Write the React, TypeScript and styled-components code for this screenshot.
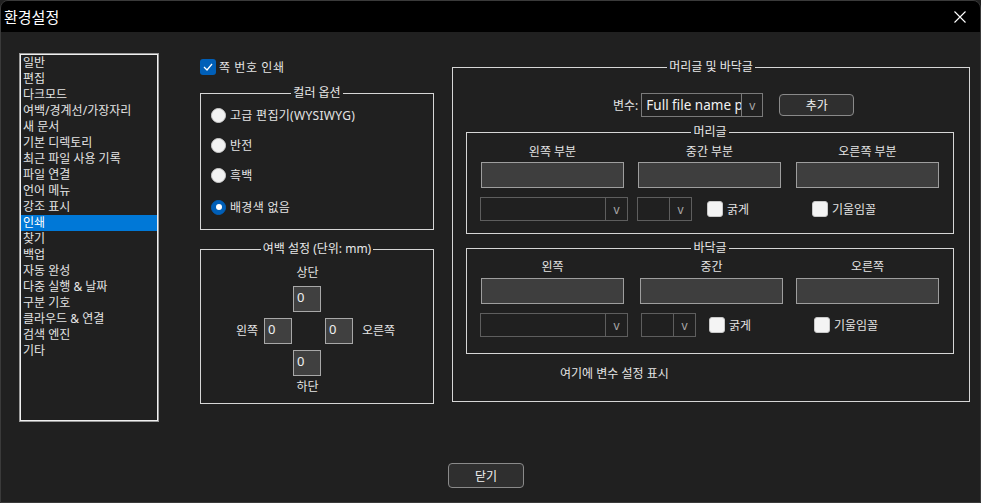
import React from "react";
import styled, { createGlobalStyle } from "styled-components";

const Global = createGlobalStyle`
  html, body { margin: 0; padding: 0; background: #202020; }
  * { box-sizing: border-box; }
`;

const FONT = `"Noto Sans", "Noto Sans CJK KR", sans-serif`;

const Window = styled.div`
  width: 981px;
  height: 503px;
  display: flex;
  flex-direction: column;
  background: #202020;
  border: 1px solid #3a3a3a;
  border-radius: 8px 8px 0 0;
  overflow: hidden;
  font-family: ${FONT};
  font-size: 12px;
  color: #e4e4e4;
`;

const TitleBar = styled.div`
  height: 31px;
  flex: none;
  background: #000;
  display: flex;
  align-items: center;
  padding-left: 3px;
`;

const TitleText = styled.div`
  font-size: 15px;
  color: #fff;
  font-family: "Noto Sans CJK KR", sans-serif;
  flex: 1;
`;

const CloseX = styled.div`
  width: 40px;
  height: 31px;
  display: flex;
  align-items: center;
  justify-content: center;
`;

const Main = styled.div`
  display: flex;
  align-items: flex-start;
  padding: 21px 0 0 18px;
`;

const ListBox = styled.div`
  width: 140px;
  height: 369px;
  border: 1px solid #9a9a9a;
  box-shadow: inset 0 0 0 1px #f0f0f0;
  padding: 1px;
  flex: none;
`;

const ListItem = styled.div<{ $selected?: boolean }>`
  height: 16px;
  line-height: 16px;
  padding-left: 2px;
  white-space: nowrap;
  background: ${(p) => (p.$selected ? "#0078d7" : "transparent")};
  color: ${(p) => (p.$selected ? "#fff" : "#e4e4e4")};
`;

const MiddleCol = styled.div`
  width: 234px;
  margin-left: 41px;
  padding-top: 6px;
  display: flex;
  flex-direction: column;
  flex: none;
`;

const CheckRow = styled.label`
  display: flex;
  align-items: center;
  height: 16px;
  gap: 3px;
  letter-spacing: 0.6px;
`;

const BlueCheck = styled.span`
  width: 16px;
  height: 16px;
  border-radius: 3px;
  background: #005fb8;
  display: flex;
  align-items: center;
  justify-content: center;
  flex: none;
`;

const WhiteBox = styled.span`
  width: 16px;
  height: 16px;
  border-radius: 3px;
  background: #f4f4f4;
  border: 1px solid #c8c8c8;
  flex: none;
`;

const Group = styled.div<{ $h: number; $mt: number }>`
  border: 1px solid #d6d6d6;
  height: ${(p) => p.$h}px;
  margin-top: ${(p) => p.$mt}px;
  display: flex;
  flex-direction: column;
`;

const GroupTitle = styled.div`
  display: table;
  margin: -9px auto 0;
  padding: 0 2px;
  line-height: 16px;
  height: 16px;
  background: #202020;
  color: #e8e8e8;
  white-space: nowrap;
`;

const RadioList = styled.div`
  display: flex;
  flex-direction: column;
  gap: 10px;
  padding: 4px 0 0 10px;
`;

const RadioRow = styled.div<{ $mt?: number }>`
  display: flex;
  align-items: center;
  height: 20px;
  gap: 4px;
  margin-top: ${(p) => p.$mt ?? 0}px;
  letter-spacing: 0.3px;
`;

const RadioDot = styled.span<{ $on?: boolean }>`
  width: 15px;
  height: 15px;
  border-radius: 50%;
  background: ${(p) => (p.$on ? "#005fb8" : "#f2f2f2")};
  border: 1px solid ${(p) => (p.$on ? "#005fb8" : "#cfcfcf")};
  display: flex;
  align-items: center;
  justify-content: center;
  flex: none;
  &::after {
    content: "";
    display: ${(p) => (p.$on ? "block" : "none")};
    width: 6px;
    height: 6px;
    border-radius: 50%;
    background: #fff;
  }
`;

const MarginGrid = styled.div`
  display: grid;
  grid-template-columns: 63px 29px 29px 31px auto;
  grid-template-rows: 21px 32px 32px 29px 16px;
  align-items: start;
  margin-top: 8px;
`;

const GridLabel = styled.div<{ $col: number; $row: number; $align?: string; $pl?: number; $pr?: number; $mt?: number }>`
  grid-column: ${(p) => p.$col};
  grid-row: ${(p) => p.$row};
  line-height: 16px;
  text-align: ${(p) => p.$align ?? "center"};
  padding-left: ${(p) => p.$pl ?? 0}px;
  padding-right: ${(p) => p.$pr ?? 0}px;
  margin-top: ${(p) => p.$mt ?? 0}px;
  white-space: nowrap;
`;

const NumBox = styled.div<{ $col: number; $row: number; $end?: boolean }>`
  grid-column: ${(p) => p.$col};
  grid-row: ${(p) => p.$row};
  justify-self: ${(p) => (p.$end ? "end" : "start")};
  width: 28px;
  height: 26px;
  background: #404040;
  border: 1px solid #a8a8a8;
  padding: 1px 0 0 3px;
  font-size: 13px;
  line-height: 18px;
  color: #f0f0f0;
`;

const RightCol = styled.div`
  width: 518px;
  margin-left: 18px;
  margin-top: 14px;
  flex: none;
`;

const VarRow = styled.div`
  display: flex;
  align-items: center;
  margin-top: 18px;
  padding-left: 160px;
  height: 24px;
`;

const VarLabel = styled.span`
  margin-right: 3px;
  white-space: nowrap;
`;

const Combo = styled.div<{ $w: number; $h: number; $bc?: string }>`
  width: ${(p) => p.$w}px;
  height: ${(p) => p.$h}px;
  border: 1px solid ${(p) => p.$bc ?? "#5e5e5e"};
  display: flex;
  flex: none;
`;

const ComboText = styled.div`
  flex: 1;
  min-width: 0;
  overflow: hidden;
  white-space: nowrap;
  font-size: 13.5px;
  line-height: 22px;
  padding-left: 4px;
  color: #f2f2f2;
`;

const ComboArrow = styled.div<{ $w: number; $bc?: string }>`
  width: ${(p) => p.$w}px;
  border-left: 1px solid ${(p) => p.$bc ?? "#5e5e5e"};
  display: flex;
  align-items: center;
  justify-content: center;
  color: #a8a8a8;
  font-size: 12px;
  flex: none;
`;

const Button = styled.button<{ $w: number; $h: number }>`
  width: ${(p) => p.$w}px;
  height: ${(p) => p.$h}px;
  background: #2f2f2f;
  border: 1px solid #8a8a8a;
  border-radius: 4px;
  color: #f2f2f2;
  font-family: ${FONT};
  font-size: 12px;
  padding: 0;
`;

const SubGroup = styled(Group)`
  width: 488px;
  margin-left: 13px;
`;

const ColGrid = styled.div<{ $cols: string; $mt: number }>`
  display: grid;
  grid-template-columns: ${(p) => p.$cols};
  padding-left: 14px;
  margin-top: ${(p) => p.$mt}px;
`;

const ColLabel = styled.div`
  width: 143px;
  text-align: center;
  line-height: 16px;
  white-space: nowrap;
`;

const FieldBox = styled.div<{ $mt: number }>`
  width: 143px;
  height: 26px;
  margin-top: ${(p) => p.$mt}px;
  background: #3e3e3e;
  border: 1px solid #9e9e9e;
`;

const OptionRow = styled.div<{ $mt: number }>`
  display: flex;
  align-items: center;
  padding-left: 13px;
  margin-top: ${(p) => p.$mt}px;
  height: 24px;
`;

const CheckOption = styled.label<{ $w?: number; $ml: number }>`
  display: flex;
  align-items: center;
  gap: 4px;
  margin-left: ${(p) => p.$ml}px;
  width: ${(p) => (p.$w ? `${p.$w}px` : "auto")};
  white-space: nowrap;
`;

const VarNote = styled.div`
  margin-top: 12px;
  padding-left: 107px;
  line-height: 16px;
`;

const BottomBar = styled.div`
  display: flex;
  justify-content: center;
  margin-top: 41px;
`;

const CloseButton = styled(Button)`
  margin-right: 9px;
`;

const items = [
  "일반",
  "편집",
  "다크모드",
  "여백/경계선/가장자리",
  "새 문서",
  "기본 디렉토리",
  "최근 파일 사용 기록",
  "파일 연결",
  "언어 메뉴",
  "강조 표시",
  "인쇄",
  "찾기",
  "백업",
  "자동 완성",
  "다중 실행 & 날짜",
  "구분 기호",
  "클라우드 & 연결",
  "검색 엔진",
  "기타",
];

const CheckMark = () => (
  <svg width="10" height="8" viewBox="0 0 10 8">
    <polyline points="1,4 4,7 9,1" fill="none" stroke="#fff" strokeWidth="1.3" />
  </svg>
);

const SectionOptions: React.FC<{ mt: number; c2w: number; c2ml: number; boldMl: number }> = ({ mt, c2w, c2ml, boldMl }) => (
  <OptionRow $mt={mt}>
    <Combo $w={148} $h={24}>
      <ComboText />
      <ComboArrow $w={22}>v</ComboArrow>
    </Combo>
    <Combo $w={c2w} $h={24} style={{ marginLeft: c2ml }}>
      <ComboText />
      <ComboArrow $w={22}>v</ComboArrow>
    </Combo>
    <CheckOption $ml={boldMl} $w={105}>
      <WhiteBox />
      굵게
    </CheckOption>
    <CheckOption $ml={0}>
      <WhiteBox />
      기울임꼴
    </CheckOption>
  </OptionRow>
);

export default function App() {
  return (
    <>
      <Global />
      <Window>
        <TitleBar>
          <TitleText>환경설정</TitleText>
          <CloseX>
            <svg width="12" height="12" viewBox="0 0 12 12">
              <path d="M0.5 0.5 L11.5 11.5 M11.5 0.5 L0.5 11.5" stroke="#fff" strokeWidth="1.1" />
            </svg>
          </CloseX>
        </TitleBar>
        <Main>
          <ListBox>
            {items.map((it) => (
              <ListItem key={it} $selected={it === "인쇄"}>
                {it}
              </ListItem>
            ))}
          </ListBox>
          <MiddleCol>
            <CheckRow>
              <BlueCheck>
                <CheckMark />
              </BlueCheck>
              쪽 번호 인쇄
            </CheckRow>
            <Group $h={137} $mt={18}>
              <GroupTitle>컬러 옵션</GroupTitle>
              <RadioList>
                <RadioRow>
                  <RadioDot />
                  고급 편집기(WYSIWYG)
                </RadioRow>
                <RadioRow>
                  <RadioDot />
                  반전
                </RadioRow>
                <RadioRow>
                  <RadioDot />
                  흑백
                </RadioRow>
                <RadioRow $mt={2}>
                  <RadioDot $on />
                  배경색 없음
                </RadioRow>
              </RadioList>
            </Group>
            <Group $h={155} $mt={19}>
              <GroupTitle>여백 설정 (단위: mm)</GroupTitle>
              <MarginGrid>
                <GridLabel $col={3} $row={1}>상단</GridLabel>
                <NumBox $col={3} $row={2}>0</NumBox>
                <GridLabel $col={1} $row={3} $align="right" $pr={6} $mt={5}>왼쪽</GridLabel>
                <NumBox $col={2} $row={3}>0</NumBox>
                <NumBox $col={4} $row={3} $end>0</NumBox>
                <GridLabel $col={5} $row={3} $align="left" $pl={9} $mt={5}>오른쪽</GridLabel>
                <NumBox $col={3} $row={4}>0</NumBox>
                <GridLabel $col={3} $row={5}>하단</GridLabel>
              </MarginGrid>
            </Group>
          </MiddleCol>
          <RightCol>
            <Group $h={335} $mt={0}>
              <GroupTitle>머리글 및 바닥글</GroupTitle>
              <VarRow>
                <VarLabel>변수:</VarLabel>
                <Combo $w={122} $h={24} $bc="#7a7a7a">
                  <ComboText>Full file name pa</ComboText>
                  <ComboArrow $w={21} $bc="#7a7a7a">v</ComboArrow>
                </Combo>
                <Button $w={75} $h={22} style={{ marginLeft: 16 }}>
                  추가
                </Button>
              </VarRow>
              <SubGroup $h={102} $mt={15}>
                <GroupTitle>머리글</GroupTitle>
                <ColGrid $cols="157px 158px 143px" $mt={4}>
                  <ColLabel>왼쪽 부분</ColLabel>
                  <ColLabel>중간 부분</ColLabel>
                  <ColLabel>오른쪽 부분</ColLabel>
                  <FieldBox $mt={2} />
                  <FieldBox $mt={2} />
                  <FieldBox $mt={2} />
                </ColGrid>
                <SectionOptions mt={9} c2w={55} c2ml={9} boldMl={15} />
              </SubGroup>
              <SubGroup $h={106} $mt={14}>
                <GroupTitle>바닥글</GroupTitle>
                <ColGrid $cols="159px 156px 143px" $mt={3}>
                  <ColLabel>왼쪽</ColLabel>
                  <ColLabel>중간</ColLabel>
                  <ColLabel>오른쪽</ColLabel>
                  <FieldBox $mt={3} />
                  <FieldBox $mt={3} />
                  <FieldBox $mt={3} />
                </ColGrid>
                <SectionOptions mt={9} c2w={55} c2ml={13} boldMl={13} />
              </SubGroup>
              <VarNote>여기에 변수 설정 표시</VarNote>
            </Group>
          </RightCol>
        </Main>
        <BottomBar>
          <CloseButton $w={76} $h={25}>닫기</CloseButton>
        </BottomBar>
      </Window>
    </>
  );
}
